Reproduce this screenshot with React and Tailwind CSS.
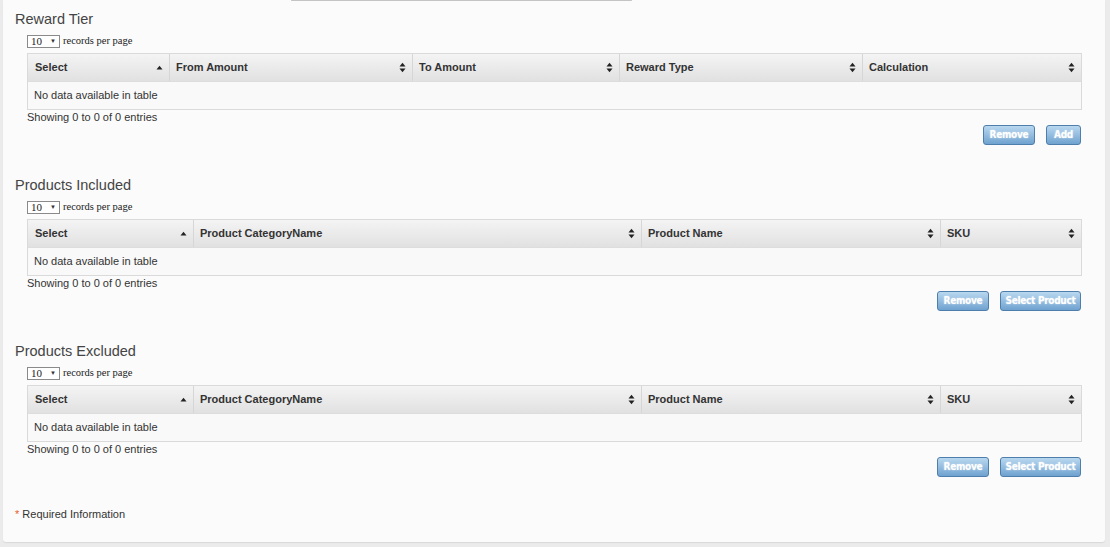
import React from "react";

const SortUp = () => (
  <svg width="7" height="5" viewBox="0 0 7 5" className="shrink-0">
    <path d="M0.5 4.5 L3.5 0.8 L6.5 4.5 Z" fill="#222" />
  </svg>
);

const SortBoth = () => (
  <svg width="7" height="11" viewBox="0 0 7 11" className="shrink-0">
    <path d="M0.5 4.5 L3.5 0.8 L6.5 4.5 Z" fill="#222" />
    <path d="M0.5 6.5 L3.5 10.2 L6.5 6.5 Z" fill="#222" />
  </svg>
);

function Btn({ children, w }) {
  return (
    <button
      className={`h-[20px] ${w} rounded-[3px] border border-[#4e7eab] bg-gradient-to-b from-[#b9d8f0] to-[#6fa2cf] text-[10px] font-bold text-white [text-shadow:0_0_2px_rgba(255,255,255,0.6)] leading-none`}
      style={{ fontFamily: '"DejaVu Sans Condensed", "Liberation Sans", sans-serif', letterSpacing: "-0.3px" }}
    >
      {children}
    </button>
  );
}

function Section({ title, cols, buttons }) {
  return (
    <div className="h-[166px] pt-1">
      <div className="h-[20px] pl-3 text-[14.5px] leading-[20px] text-[#444]">{title}</div>
      <div className="mt-[3px] h-[18px] pl-6 flex items-center gap-[3px]">
        <div className="w-[33px] h-[13px] border border-[#8a8a8a] bg-white flex items-center justify-between px-[3px]">
          <span className="text-[11px] leading-none text-[#222]" style={{ fontFamily: '"Liberation Serif", serif' }}>10</span>
          <span className="text-[6px] leading-none text-[#333]">▼</span>
        </div>
        <span className="text-[10.5px] text-[#222]" style={{ fontFamily: '"Liberation Serif", serif' }}>records per page</span>
      </div>
      <div className="mt-[3px] ml-6 mr-[23px] border border-[#dadada]">
        <div className="flex h-[28px] bg-gradient-to-b from-[#f4f4f4] to-[#e1e1e1] border-b border-[#dddddd]">
          {cols.map((c, i) => (
            <div
              key={c.label}
              className={`flex items-center justify-between pr-[6px] ${i > 0 ? "border-l border-[#d6d6d6] pl-[6px]" : "pl-[7px]"}`}
              style={{ width: c.w }}
            >
              <span className="text-[11px] font-bold text-[#333]">{c.label}</span>
              {i === 0 ? <SortUp /> : <SortBoth />}
            </div>
          ))}
        </div>
        <div className="h-[27px] bg-[#f9f9f9] flex items-center pl-[6px] text-[11px] text-[#333]">
          No data available in table
        </div>
      </div>
      <div className="ml-6 h-[14px] text-[11px] leading-[14px] text-[#333]">Showing 0 to 0 of 0 entries</div>
      <div className="mt-[1px] mr-6 flex justify-end gap-[11px]">{buttons}</div>
    </div>
  );
}

export default function App() {
  const reward = [
    { label: "Select", w: 141 },
    { label: "From Amount", w: 243 },
    { label: "To Amount", w: 207 },
    { label: "Reward Type", w: 243 },
    { label: "Calculation", w: 219 },
  ];
  const products = [
    { label: "Select", w: 165 },
    { label: "Product CategoryName", w: 448 },
    { label: "Product Name", w: 299 },
    { label: "SKU", w: 141 },
  ];
  return (
    <div className="w-[1110px] h-[547px] bg-[#ebebeb] overflow-hidden" style={{ fontFamily: '"Liberation Sans", Arial, sans-serif' }}>
      <div className="ml-[3px] w-[1102px] h-[542px] bg-[#fbfbfb] rounded-b-[3px] shadow-[0_1px_1px_rgba(0,0,0,0.08)]">
        <div className="ml-[288px] w-[341px] h-px bg-[#c4c4c4] rounded-full" />
        <div className="pt-[4px]">
          <Section
            title="Reward Tier"
            cols={reward}
            buttons={[<Btn key="r" w="w-[52px]">Remove</Btn>, <Btn key="a" w="w-[35px]">Add</Btn>]}
          />
          <Section
            title="Products Included"
            cols={products}
            buttons={[<Btn key="r" w="w-[52px]">Remove</Btn>, <Btn key="s" w="w-[81px]">Select Product</Btn>]}
          />
          <Section
            title="Products Excluded"
            cols={products}
            buttons={[<Btn key="r" w="w-[52px]">Remove</Btn>, <Btn key="s" w="w-[81px]">Select Product</Btn>]}
          />
          <div className="mt-[4px] pl-3 text-[11px] leading-[14px] text-[#333]">
            <span className="text-[#e8602c]">*</span> Required Information
          </div>
        </div>
      </div>
    </div>
  );
}
